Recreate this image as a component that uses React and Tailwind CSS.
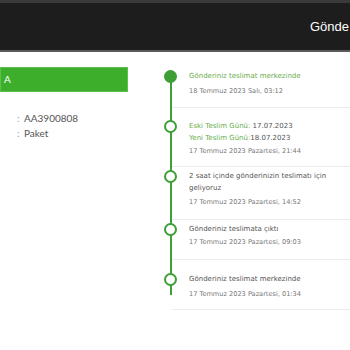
import React from 'react'

const green = 'text-[#6aae4e]'

const events = [
  {
    filled: true,
    pt: 6,
    gap: 'mt-[3px]',
    pb: 'pb-[10px]',
    title: <span className={green}>Gönderiniz teslimat merkezinde</span>,
    date: '18 Temmuz 2023 Salı, 03:12',
  },
  {
    pt: 12,
    gap: 'mt-[1px]',
    pb: 'pb-[9px]',
    title: (
      <>
        <div>
          <span className={green}>Eski Teslim Günü: </span>17.07.2023
        </div>
        <div>
          <span className={green}>Yeni Teslim Günü:</span>18.07.2023
        </div>
      </>
    ),
    date: '17 Temmuz 2023 Pazartesi, 21:44',
  },
  {
    pt: 3,
    gap: 'mt-[2px]',
    pb: 'pb-[11px]',
    title: (
      <>
        <div>2 saat içinde gönderinizin teslimatı için</div>
        <div>geliyoruz</div>
      </>
    ),
    date: '17 Temmuz 2023 Pazartesi, 14:52',
  },
  {
    pt: 3,
    gap: 'mt-[1px]',
    pb: 'pb-[11px]',
    title: 'Gönderiniz teslimata çıktı',
    date: '17 Temmuz 2023 Pazartesi, 09:03',
  },
  {
    pt: 13,
    gap: 'mt-[3px]',
    pb: 'pb-[9px]',
    title: 'Gönderiniz teslimat merkezinde',
    date: '17 Temmuz 2023 Pazartesi, 01:34',
  },
]

export default function App() {
  return (
    <div className="w-[350px] h-[350px] overflow-hidden bg-white font-['Lato',sans-serif]">
      <header className="h-[52px] bg-[#1d1d1d] border-t-[3px] border-t-[#3a3a3a] border-b-2 border-b-[#5b5b5b] flex items-center justify-end">
        <span className="font-['Liberation_Sans',Arial,sans-serif] text-[13px] text-white whitespace-nowrap pr-px">
          Gönde
        </span>
      </header>

      <div className="flex">
        <div className="w-[128px] shrink-0 pt-[15px]">
          <div className="h-[25px] bg-[#3dae2b] border border-[#5cc04c] flex items-center pl-[3px] text-[10px] text-white">
            A
          </div>
          <div className="pt-[19px] pl-[17px] text-[10px] text-[#555] leading-[15px]">
            <div className="flex">
              <span className="w-[7px] text-[#999]">:</span>
              <span>AA3900808</span>
            </div>
            <div className="flex">
              <span className="w-[7px] text-[#999]">:</span>
              <span>Paket</span>
            </div>
          </div>
        </div>

        <div className="relative ml-[36px] mt-[12px] flex-1 font-['DejaVu_Sans',sans-serif]">
          <div className="absolute left-[6px] top-[12px] h-[219px] w-[2px] bg-[#3d9f35]" />
          {events.map((e, i) => (
            <div
              key={i}
              className={`relative ml-[8px] border-b border-[#ececec] ${e.pb} pl-[17px] leading-[12px]`}
              style={{ paddingTop: e.pt }}
            >
              <span
                className={`absolute left-[-8px] h-[13px] w-[13px] rounded-full border-2 border-[#3d9f35] ${e.filled ? 'bg-[#3d9f35]' : 'bg-white'}`}
                style={{ top: e.pt - 0.5 }}
              />
              <div className="text-[7px] text-[#555] whitespace-nowrap">{e.title}</div>
              <div className={`${e.gap} text-[6.6px] text-[#777] whitespace-nowrap`}>{e.date}</div>
            </div>
          ))}
        </div>
      </div>
    </div>
  )
}
